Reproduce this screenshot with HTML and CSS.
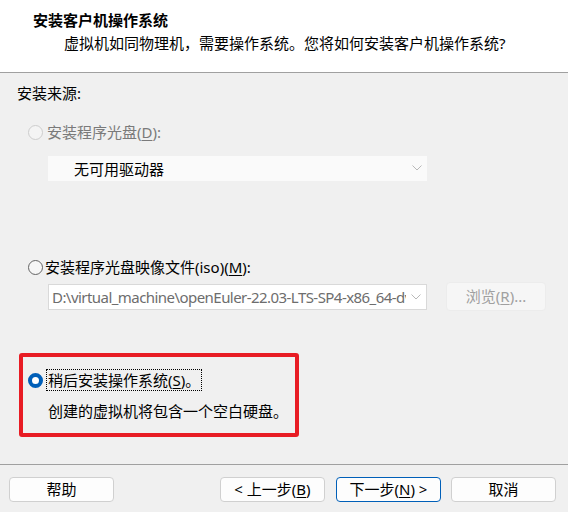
FILE: index.html
```html
<!DOCTYPE html>
<html lang="zh-CN">
<head>
<meta charset="UTF-8" />
<meta name="viewport" content="width=device-width, initial-scale=1" />
<title>新建虚拟机向导</title>
<link rel="stylesheet" href="styles.css">
</head>
<body>

<div class="header">
  <div class="title">安装客户机操作系统</div>
  <div class="subtitle">虚拟机如同物理机，需要操作系统。您将如何安装客户机操作系统?</div>
</div>

<div class="content">
  <div class="group-label">安装来源:</div>

  <div class="option option-first disabled">
    <span class="radio"></span>
    <span class="option-text">安装程序光盘(<u>D</u>):</span>
  </div>
  <div class="field-row">
    <div class="select select-disabled">
      <span class="select-text">无可用驱动器</span>
      <svg class="chevron" width="10" height="6" viewBox="0 0 10 6"><polyline points="0.5,0.5 5,5 9.5,0.5" fill="none" stroke="#b8b8b8" stroke-width="1"/></svg>
    </div>
  </div>

  <div class="option option-iso">
    <span class="radio"></span>
    <span class="option-text">安装程序光盘映像文件(iso)(<u>M</u>):</span>
  </div>
  <div class="field-row field-iso">
    <div class="select select-path">
      <span class="select-text">D:\virtual_machine\openEuler-22.03-LTS-SP4-x86_64-dvd.iso</span>
      <svg class="chevron" width="10" height="6" viewBox="0 0 10 6"><polyline points="0.5,0.5 5,5 9.5,0.5" fill="none" stroke="#b8b8b8" stroke-width="1"/></svg>
    </div>
    <div class="btn btn-disabled btn-browse">浏览(<u>R</u>)...</div>
  </div>

  <div class="highlight">
    <div class="option">
      <span class="radio radio-checked"></span>
      <span class="option-text focus">稍后安装操作系统(<u>S</u>)。</span>
    </div>
    <div class="note">创建的虚拟机将包含一个空白硬盘。</div>
  </div>
</div>

<div class="footer">
  <div class="btn">帮助</div>
  <div class="btn btn-back">&lt; 上一步(<u>B</u>)</div>
  <div class="btn btn-default">下一步(<u>N</u>) &gt;</div>
  <div class="btn">取消</div>
</div>

</body>
</html>
```

FILE: styles.css
```css
body {
  margin: 0;
  background: #f0f0f0;
  color: #000;
  font-family: "Noto Sans", "Noto Sans CJK SC", sans-serif;
  font-size: 15px;
  line-height: 20px;
}
u {
  text-underline-offset: 2px;
}

.header {
  background: #fff;
  height: 62px;
  padding: 10px 0 0 33px;
  border-bottom: 1px solid #a0a0a0;
}
.title {
  font-weight: bold;
}
.subtitle {
  margin: 3px 0 0 31px;
}

.content {
  box-sizing: border-box;
  height: 391px;
  padding: 10px 0 0 17px;
}

.option {
  display: flex;
  align-items: center;
  height: 20px;
  padding-left: 11px;
}
.option-first {
  margin-top: 19px;
}
.option-iso {
  margin-top: 76px;
}
.option .option-text {
  margin-left: 4px;
}
.option-iso .option-text {
  margin-left: 2px;
}
.disabled .option-text {
  color: #7a7a7a;
}

.radio {
  box-sizing: border-box;
  width: 15px;
  height: 15px;
  border-radius: 50%;
  border: 1px solid #646464;
  background: #f6f6f6;
  flex: none;
}
.disabled .radio {
  border-color: #cdcdcd;
  background: #f4f4f4;
}
.radio-checked {
  border: 4.5px solid #005fb8;
  background: #fff;
}

.field-row {
  display: flex;
  align-items: center;
  margin: 14px 0 0 31px;
}
.field-iso {
  margin-top: 5px;
}

.select {
  box-sizing: border-box;
  width: 379px;
  height: 25px;
  display: flex;
  align-items: center;
  background: #fafafa;
  position: relative;
}
.select-disabled .select-text {
  padding-left: 26px;
}
.select-path {
  height: 26px;
  background: #fff;
  border: 1px solid #d9d9d9;
}
.select-path .select-text {
  color: #6d6d6d;
  padding-left: 3px;
  width: 354px;
  overflow: hidden;
  white-space: nowrap;
  letter-spacing: -0.55px;
}
.chevron {
  position: absolute;
  right: 5px;
  top: 9px;
}

.btn {
  box-sizing: border-box;
  width: 105px;
  height: 25px;
  background: #fdfdfd;
  border: 1px solid #d0d0d0;
  border-radius: 4px;
  text-align: center;
  line-height: 23px;
}
.btn-disabled {
  background: #f6f6f6;
  border-color: #ececec;
  color: #a0a0a0;
}
.btn-browse {
  width: 100px;
  height: 29px;
  line-height: 27px;
  margin-left: 19px;
}

.highlight {
  box-sizing: border-box;
  width: 280px;
  height: 84px;
  margin: 42px 0 0 2px;
  border: 4px solid #e81c24;
  border-radius: 3px;
  padding: 13px 0 0 0;
}
.highlight .option {
  padding-left: 5px;
}
.focus {
  outline: 1px dotted #000;
  padding: 0 1px;
}
.note {
  margin: 11px 0 0 25px;
}

.footer {
  display: flex;
  border-top: 1px solid #a0a0a0;
  padding: 12px 12px 0 9px;
}
.btn-back {
  margin-left: auto;
}
.btn-default {
  margin: 0 10px 0 11px;
  border-color: #005fb8;
}
```
